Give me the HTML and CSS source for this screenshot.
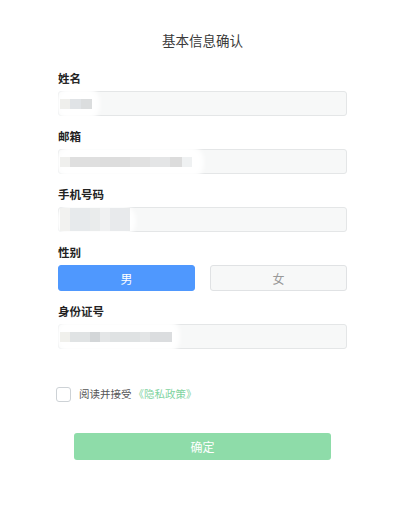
FILE: index.html
```html
<!DOCTYPE html>
<html lang="zh">
<head>
<meta charset="utf-8">
<title>基本信息确认</title>
<link rel="stylesheet" href="styles.css">
</head>
<body>
<div class="page">
  <h1 class="title">基本信息确认</h1>
  <form class="form">
    <div class="label">姓名</div>
    <div class="field">
      <span class="blob blob-name"></span>
      <span class="mask">
        <i class="px" style="width:10px;background:#eeeeea"></i><i class="px" style="width:11px;background:#dde1e4"></i><i class="px" style="width:11px;background:#d8dadb"></i>
      </span>
    </div>

    <div class="label">邮箱</div>
    <div class="field">
      <span class="blob blob-mail"></span>
      <span class="mask">
        <i class="px" style="width:10px;background:#eeeeec"></i><i class="px" style="width:30px;background:#dcdcdc"></i><i class="px" style="width:30px;background:#dadada"></i><i class="px" style="width:20px;background:#dedede"></i><i class="px" style="width:20px;background:#e2e3e4"></i><i class="px" style="width:12px;background:#d9d9d9"></i><i class="px" style="width:10px;background:#eef0f1"></i>
      </span>
    </div>

    <div class="label">手机号码</div>
    <div class="field">
      <span class="blob blob-phone"></span>
      <span class="mask tall">
        <i class="px" style="width:10px;background:#f1f1ef"></i><i class="px" style="width:20px;background:#e5e8ea"></i><i class="px" style="width:10px;background:#e8eaeb"></i><i class="px" style="width:10px;background:#eff0f1"></i><i class="px" style="width:20px;background:#e6e8ea"></i>
      </span>
    </div>

    <div class="label">性别</div>
    <div class="gender">
      <button type="button" class="gbtn active">男</button>
      <button type="button" class="gbtn">女</button>
    </div>

    <div class="label">身份证号</div>
    <div class="field">
      <span class="blob blob-id"></span>
      <span class="mask">
        <i class="px" style="width:10px;background:#efefeb"></i><i class="px" style="width:20px;background:#dde0e2"></i><i class="px" style="width:10px;background:#cfd2d4"></i><i class="px" style="width:10px;background:#e2e4e5"></i><i class="px" style="width:30px;background:#dcdfe1"></i><i class="px" style="width:10px;background:#e1e3e4"></i><i class="px" style="width:22px;background:#d8dadc"></i>
      </span>
    </div>

    <label class="agree">
      <span class="check"></span>
      <span class="agree-text">阅读并接受</span><span class="link">《隐私政策》</span>
    </label>

    <div class="submit-row">
      <button type="button" class="submit">确定</button>
    </div>
  </form>
</div>
</body>
</html>
```

FILE: styles.css
```css
* { box-sizing: border-box; }
html, body {
  margin: 0;
  padding: 0;
  background: #ffffff;
  font-family: "Noto Sans CJK SC", "Noto Sans", sans-serif;
  color: #333333;
}
.page {
  width: 403px;
  padding: 30px 56px 0 58px;
}
.title {
  margin: 0 0 20px;
  font-size: 13.5px;
  line-height: 20px;
  font-weight: normal;
  text-align: center;
  color: #3a3a3a;
}
.form {
  display: flex;
  flex-direction: column;
  width: 289px;
}
.label {
  font-size: 11.5px;
  line-height: 16px;
  font-weight: bold;
  color: #222;
  margin-bottom: 5px;
}
.field {
  position: relative;
  height: 25px;
  background: #f7f8f8;
  border: 1px solid #e4e6e7;
  border-radius: 3px;
  margin-bottom: 12px;
  display: flex;
  align-items: center;
  padding-left: 1px;
}
.blob {
  position: absolute;
  left: -3px;
  background: rgba(255, 255, 255, 0.9);
  border-radius: 16px;
  filter: blur(2px);
}
.blob-name { top: -6px; width: 44px; height: 36px; }
.blob-mail { top: -5px; width: 148px; height: 35px; }
.blob-phone { top: -4px; width: 80px; height: 34px; }
.blob-id { top: -7px; width: 124px; height: 37px; }
.mask {
  position: relative;
  display: flex;
  height: 10px;
  opacity: 0.9;
}
.mask.tall { height: 23px; }
.px { display: block; height: 100%; }
.gender {
  display: flex;
  justify-content: space-between;
  margin-bottom: 12px;
}
.gbtn {
  width: 137px;
  height: 26px;
  border: 1px solid #e0e2e4;
  border-radius: 3px;
  background: #f7f8f8;
  color: #999999;
  font-family: inherit;
  font-size: 12px;
  padding: 0;
}
.gbtn.active {
  background: #4f98fe;
  border-color: #4f98fe;
  color: #ffffff;
}
.agree {
  display: flex;
  align-items: center;
  margin: 25px 0 0 -2px;
  font-size: 10.5px;
  line-height: 16px;
}
.check {
  width: 15px;
  height: 15px;
  border: 1px solid #cdd2d6;
  border-radius: 3px;
  background: #fff;
  margin-right: 8px;
}
.agree-text { color: #555555; margin-right: 2px; }
.link { color: #7fd49f; }
.submit-row {
  display: flex;
  justify-content: center;
  margin-top: 31px;
  margin-left: -42px;
  width: 373px;
}
.submit {
  width: 257px;
  height: 27px;
  border: none;
  border-radius: 3px;
  background: #8edca9;
  color: #ffffff;
  font-family: inherit;
  font-size: 12px;
  padding: 0;
}
```
